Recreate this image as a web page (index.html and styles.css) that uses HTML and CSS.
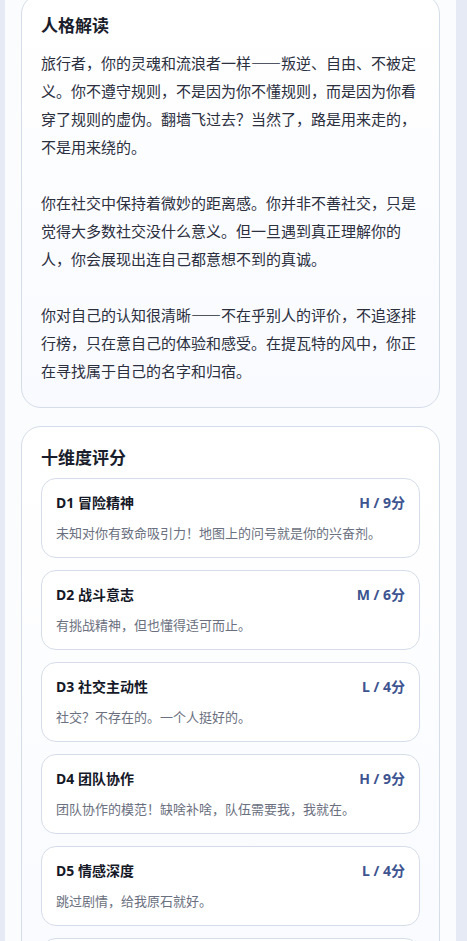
FILE: index.html
```html
<!DOCTYPE html>
<html lang="zh-CN">
<head>
  <meta charset="UTF-8">
  <title>人格解读</title>
  <link rel="stylesheet" href="styles.css">
</head>
<body>
  <div class="page">
    <section class="card card-intro">
      <h2 class="card-title">人格解读</h2>
      <p class="reading">旅行者，你的灵魂和流浪者一样——叛逆、自由、不被定义。你不遵守规则，不是因为你不懂规则，而是因为你看穿了规则的虚伪。翻墙飞过去？当然了，路是用来走的，不是用来绕的。</p>
      <p class="reading">你在社交中保持着微妙的距离感。你并非不善社交，只是觉得大多数社交没什么意义。但一旦遇到真正理解你的人，你会展现出连自己都意想不到的真诚。</p>
      <p class="reading">你对自己的认知很清晰——不在乎别人的评价，不追逐排行榜，只在意自己的体验和感受。在提瓦特的风中，你正在寻找属于自己的名字和归宿。</p>
    </section>

    <section class="card">
      <h2 class="card-title">十维度评分</h2>
      <div class="dims">
        <div class="dim">
          <div class="dim-head"><span class="dim-name">D1 冒险精神</span><span class="dim-score">H / 9分</span></div>
          <div class="dim-desc">未知对你有致命吸引力！地图上的问号就是你的兴奋剂。</div>
        </div>
        <div class="dim">
          <div class="dim-head"><span class="dim-name">D2 战斗意志</span><span class="dim-score">M / 6分</span></div>
          <div class="dim-desc">有挑战精神，但也懂得适可而止。</div>
        </div>
        <div class="dim">
          <div class="dim-head"><span class="dim-name">D3 社交主动性</span><span class="dim-score">L / 4分</span></div>
          <div class="dim-desc">社交？不存在的。一个人挺好的。</div>
        </div>
        <div class="dim">
          <div class="dim-head"><span class="dim-name">D4 团队协作</span><span class="dim-score">H / 9分</span></div>
          <div class="dim-desc">团队协作的模范！缺啥补啥，队伍需要我，我就在。</div>
        </div>
        <div class="dim">
          <div class="dim-head"><span class="dim-name">D5 情感深度</span><span class="dim-score">L / 4分</span></div>
          <div class="dim-desc">跳过剧情，给我原石就好。</div>
        </div>
        <div class="dim dim-cut"></div>
      </div>
    </section>
  </div>
</body>
</html>
```

FILE: styles.css
```css
body {
  margin: 0;
  padding: 0;
  background: #e5eaf4;
  font-family: "Noto Sans", "Noto Sans CJK SC", sans-serif;
  color: #1f2333;
  overflow: hidden;
  height: 941px;
}
.page {
  margin-left: 5px;
  width: 451px;
  min-height: 941px;
  box-sizing: border-box;
  padding: 0 16px;
  background: #fbfcfe;
}
.card {
  border: 1px solid #d6dde9;
  border-radius: 20px;
  padding: 20px 19px;
  margin-bottom: 18px;
  background: linear-gradient(180deg, #ffffff 0%, #f8faff 100%);
}
.card-intro {
  margin-top: -6px;
  padding-bottom: 22px;
}
.card-title {
  margin: 0 0 9px;
  font-size: 17px;
  line-height: 22px;
  font-weight: 700;
  color: #1a1d2b;
}
.card-intro .card-title {
  margin-bottom: 12px;
}
.reading {
  margin: 0 0 28px;
  font-family: "Noto Sans CJK SC", sans-serif;
  font-size: 15px;
  line-height: 28px;
  color: #2b2f3e;
}
.reading:last-child {
  margin-bottom: 0;
}
.dims {
  display: flex;
  flex-direction: column;
  gap: 12px;
}
.dim {
  border: 1px solid #d6dde9;
  border-radius: 15px;
  padding: 14px;
  background: #ffffff;
}
.dim-cut {
  height: 40px;
}
.dim-head {
  display: flex;
  justify-content: space-between;
  align-items: center;
  font-size: 14px;
  line-height: 20px;
  font-weight: 700;
}
.dim-name {
  color: #151827;
}
.dim-score {
  color: #3d5490;
}
.dim-desc {
  margin-top: 10px;
  font-size: 13px;
  line-height: 20px;
  color: #6b7080;
}
```
